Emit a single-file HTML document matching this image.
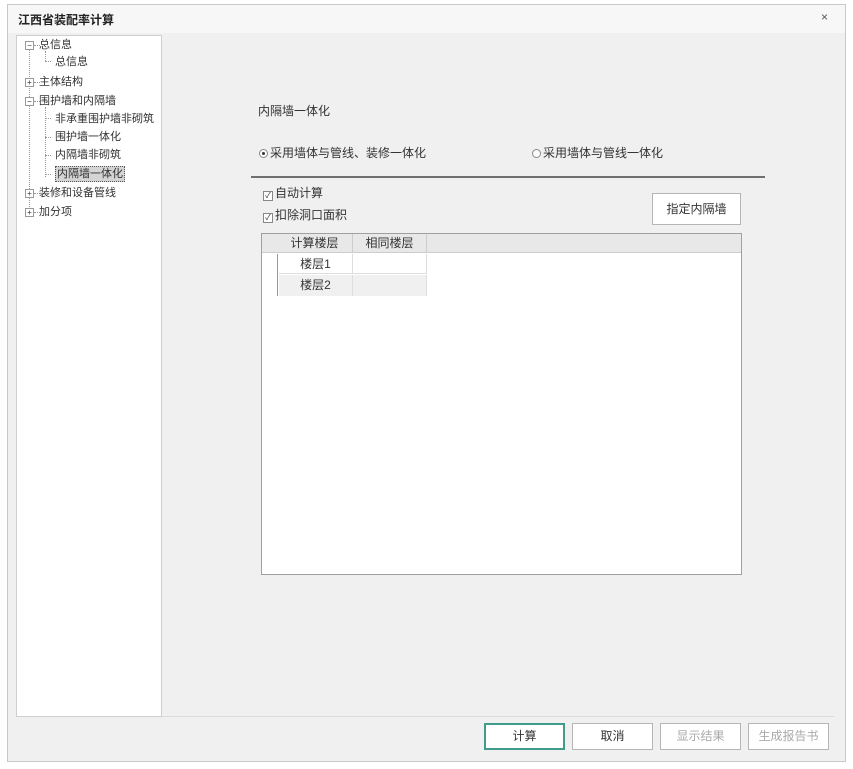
<!DOCTYPE html>
<html><head><meta charset="utf-8"><style>
*{margin:0;padding:0;box-sizing:border-box}
body{width:853px;height:769px;background:#fff;font-family:"Liberation Sans","Noto Sans CJK SC",sans-serif;font-size:11px;color:#333;position:relative;overflow:hidden}
.a{position:absolute}
.win{left:7px;top:4px;width:839px;height:758px;border:1px solid #c8c8c8;background:#f0f0f0}
.title{left:8px;top:5px;width:837px;height:28px;background:#f7f7f7}
.tree{left:16px;top:35px;width:146px;height:682px;background:#fff;border:1px solid #cfcfcf}
.t{position:absolute;white-space:nowrap;font-size:11px;line-height:14px}
.bx{position:absolute;width:9px;height:9px;border:1px solid #999;background:#fff;font-size:8px;line-height:7px;text-align:center;color:#333}
.dv{position:absolute;border-left:1px dotted #999}
.dh{position:absolute;border-top:1px dotted #999;width:6px}
.btn{position:absolute;top:723px;height:27px;border:1px solid #b5b5b5;background:#fff;text-align:center;line-height:25px;font-size:12px}
.rd{display:inline-block;width:9px;height:9px;border:1px solid #888;border-radius:50%;background:#fff;vertical-align:-1px;margin-right:2px;position:relative}
.rd.on::after{content:"";position:absolute;left:2px;top:2px;width:3px;height:3px;border-radius:50%;background:#333}
.cb{display:inline-block;width:10px;height:10px;border:1px solid #888;background:#fff;vertical-align:-1px;margin-right:2px;font-size:8px;line-height:8px;text-align:center;color:#333}
</style></head><body>
<div class="a win"></div>
<div class="a title"></div>
<div class="a" style="left:18px;top:11px;font-size:12px;font-weight:bold;color:#222">江西省装配率计算</div>
<div class="a" style="left:821px;top:10px;font-size:12px;color:#555">×</div>
<div class="a tree">
 <div class="dv" style="left:12px;top:12px;height:165px"></div>
 <div class="bx" style="left:8px;top:5px">−</div><div class="dh" style="left:17px;top:9px"></div><div class="t" style="left:22px;top:2px">总信息</div>
 <div class="dv" style="left:28px;top:15px;height:10px"></div><div class="dh" style="left:28px;top:25px"></div><div class="t" style="left:38px;top:19px">总信息</div>
 <div class="bx" style="left:8px;top:42px">+</div><div class="dh" style="left:17px;top:46px"></div><div class="t" style="left:22px;top:39px">主体结构</div>
 <div class="bx" style="left:8px;top:61px">−</div><div class="dh" style="left:17px;top:65px"></div><div class="t" style="left:22px;top:58px">围护墙和内隔墙</div>
 <div class="dv" style="left:28px;top:71px;height:70px"></div>
 <div class="dh" style="left:28px;top:82px"></div><div class="t" style="left:38px;top:76px">非承重围护墙非砌筑</div>
 <div class="dh" style="left:28px;top:101px"></div><div class="t" style="left:38px;top:94px">围护墙一体化</div>
 <div class="dh" style="left:28px;top:119px"></div><div class="t" style="left:38px;top:112px">内隔墙非砌筑</div>
 <div class="dh" style="left:28px;top:138px"></div><div class="t" style="left:38px;top:130px;background:#d4d4d4;border:1px dotted #555;padding:0 1px">内隔墙一体化</div>
 <div class="bx" style="left:8px;top:153px">+</div><div class="dh" style="left:17px;top:157px"></div><div class="t" style="left:22px;top:150px">装修和设备管线</div>
 <div class="bx" style="left:8px;top:172px">+</div><div class="dh" style="left:17px;top:176px"></div><div class="t" style="left:22px;top:169px">加分项</div>
</div>
<div class="a" style="left:258px;top:102px;font-size:12px">内隔墙一体化</div>
<div class="a" style="left:259px;top:144px;font-size:12px"><span class="rd on"></span>采用墙体与管线、装修一体化</div>
<div class="a" style="left:532px;top:144px;font-size:12px"><span class="rd"></span>采用墙体与管线一体化</div>
<div class="a" style="left:251px;top:176px;width:514px;height:2px;background:#707070"></div>
<div class="a" style="left:263px;top:184px;font-size:12px"><span class="cb">✓</span>自动计算</div>
<div class="a" style="left:263px;top:206px;font-size:12px"><span class="cb">✓</span>扣除洞口面积</div>
<div class="a" style="left:652px;top:193px;width:89px;height:32px;border:1px solid #b5b5b5;background:#fff;text-align:center;line-height:30px;font-size:12px">指定内隔墙</div>
<div class="a" style="left:261px;top:233px;width:481px;height:342px;border:1px solid #a0a0a0;background:#fff">
 <div class="a" style="left:0;top:0;width:479px;height:19px;background:#e8e8e8;border-bottom:1px solid #ccc"></div>
 <div class="a" style="left:15px;top:0;width:76px;height:19px;border-right:1px solid #ccc;text-align:center;line-height:19px;font-size:12px">计算楼层</div>
 <div class="a" style="left:91px;top:0;width:74px;height:19px;border-right:1px solid #ccc;text-align:center;line-height:19px;font-size:12px">相同楼层</div>
 <div class="a" style="left:15px;top:20px;width:1px;height:42px;background:#999"></div>
 <div class="a" style="left:17px;top:20px;width:74px;height:20px;border-bottom:1px solid #ddd;border-right:1px solid #ddd;text-align:center;line-height:20px;font-size:12px">楼层1</div>
 <div class="a" style="left:91px;top:20px;width:74px;height:20px;border-bottom:1px solid #ddd;border-right:1px solid #ddd"></div>
 <div class="a" style="left:17px;top:41px;width:74px;height:21px;background:#f0f0f0;border-right:1px solid #ddd;text-align:center;line-height:20px;font-size:12px">楼层2</div>
 <div class="a" style="left:91px;top:41px;width:74px;height:21px;background:#f0f0f0;border-right:1px solid #ddd"></div>
</div>
<div class="a" style="left:162px;top:716px;width:672px;height:1px;background:#dcdcdc"></div>
<div class="btn" style="left:484px;width:81px;border:2px solid #3f9c8a;line-height:23px">计算</div>
<div class="btn" style="left:572px;width:81px">取消</div>
<div class="btn" style="left:660px;width:81px;color:#aaa">显示结果</div>
<div class="btn" style="left:748px;width:81px;color:#aaa">生成报告书</div>
</body></html>
